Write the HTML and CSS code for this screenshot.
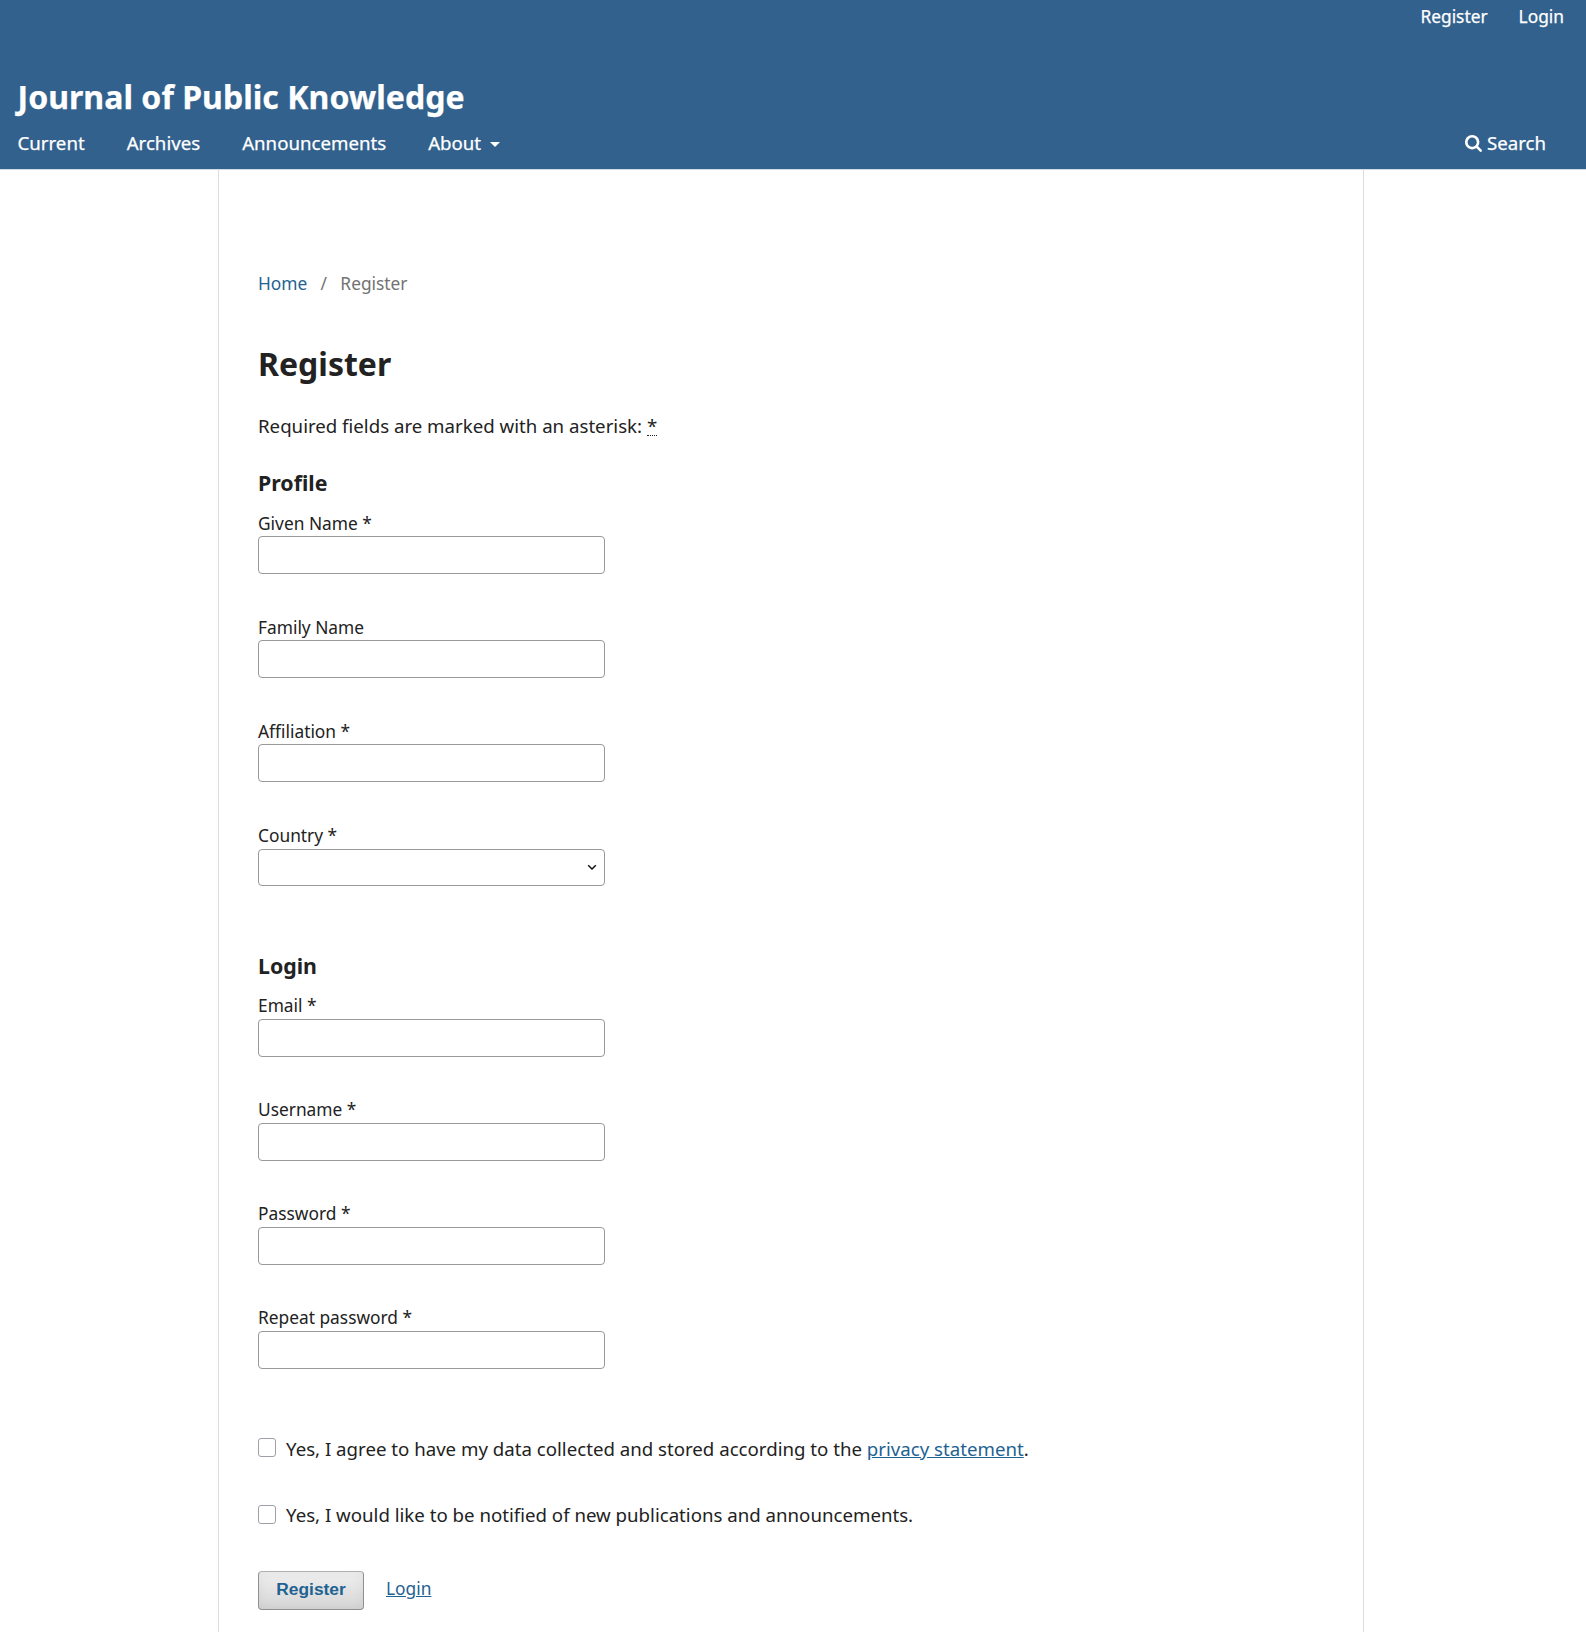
FILE: index.html
```html
<!DOCTYPE html>
<html lang="en">
<head>
<meta charset="utf-8">
<title>Register | Journal of Public Knowledge</title>
<link rel="stylesheet" href="styles.css">
</head>
<body>
<header class="head">
  <nav class="user-nav"><a href="#">Register</a><a href="#">Login</a></nav>
  <div class="site-name">Journal of Public Knowledge</div>
  <div class="nav-row">
    <nav class="primary-nav"><a href="#">Current</a><a href="#">Archives</a><a href="#">Announcements</a><a href="#">About<span class="caret"></span></a></nav>
    <a class="search" href="#"><svg class="search-icon" viewBox="0 0 1664 1664"><path fill="currentColor" d="M1152 704q0-185-131.500-316.500t-316.500-131.500-316.500 131.500-131.500 316.500 131.500 316.500 316.500 131.500 316.500-131.500 131.500-316.500zm512 832q0 52-38 90t-90 38q-54 0-90-38l-343-342q-179 124-399 124-143 0-273.500-55.500t-225-150-150-225-55.500-273.500 55.500-273.500 150-225 225-150 273.500-55.500 273.500 55.500 225 150 150 225 55.500 273.500q0 220-124 399l343 343q37 37 37 90z"/></svg>Search</a>
  </div>
</header>
<main class="content">
  <nav class="breadcrumbs"><a href="#">Home</a><span>/</span><span>Register</span></nav>
  <h1>Register</h1>
  <form>
    <p class="required-note">Required fields are marked with an asterisk: <abbr>*</abbr></p>
    <section class="group profile">
      <h2>Profile</h2>
      <div class="field"><label for="given">Given Name *</label><input id="given" type="text"></div>
      <div class="field"><label for="family">Family Name</label><input id="family" type="text"></div>
      <div class="field"><label for="affiliation">Affiliation *</label><input id="affiliation" type="text"></div>
      <div class="field"><label for="country">Country *</label>
        <div class="select" id="country"><svg class="chevron" viewBox="0 0 10 7"><path d="M1.200 1.200 5 5 8.800 1.200" fill="none" stroke="#111" stroke-width="1.500"/></svg></div></div>
    </section>
    <section class="group">
      <h2>Login</h2>
      <div class="field"><label for="email">Email *</label><input id="email" type="text"></div>
      <div class="field"><label for="username">Username *</label><input id="username" type="text"></div>
      <div class="field"><label for="password">Password *</label><input id="password" type="password"></div>
      <div class="field"><label for="repeat">Repeat password *</label><input id="repeat" type="password"></div>
    </section>
    <label class="consent"><input type="checkbox"><span>Yes, I agree to have my data collected and stored according to the <a href="#">privacy statement</a>.</span></label>
    <label class="consent notify"><input type="checkbox"><span>Yes, I would like to be notified of new publications and announcements.</span></label>
    <div class="buttons"><button type="button">Register</button><a href="#">Login</a></div>
  </form>
</main>
</body>
</html>
```
FILE: styles.css
```css
* { box-sizing: border-box; }
body {
  margin: 0;
  background: #fff;
  color: #222;
  font-family: "Noto Sans", sans-serif;
  font-size: 18.67px;
  line-height: 33px;
}
a { color: #1e6292; }
.head {
  height: 170px;
  background: #32618d;
  border-bottom: 1px solid #d5dae2;
  -webkit-text-stroke: .25px #fff;
}
.head a { color: #fff; text-decoration: none; }
.user-nav {
  display: flex;
  justify-content: flex-end;
  gap: 31px;
  height: 33px;
  padding-right: 22px;
  font-size: 17.33px;
}
.site-name {
  margin-top: 44px;
  padding-left: 17.5px;
  color: #fff;
  font-size: 32px;
  font-weight: 700;
  letter-spacing: .04px;
  line-height: 40px;
}
.nav-row {
  display: flex;
  justify-content: space-between;
  margin-top: 9px;
  padding: 0 40px 0 17.5px;
}
.primary-nav { display: flex; gap: 42px; }
.caret {
  display: inline-block;
  margin-left: 9px;
  border: 5px solid transparent;
  border-top-color: #fff;
  border-bottom: 0;
  vertical-align: 3px;
}
.search { display: flex; align-items: center; gap: 5px; }
.search-icon { width: 17px; height: 17px; margin-top: 2px; }
.content {
  width: 1146px;
  height: 1462px;
  margin-left: 218px;
  padding: 97px 39px 0;
  border: solid #ddd;
  border-width: 0 1px;
}
.breadcrumbs {
  display: flex;
  gap: 13.3px;
  color: #737373;
  font-size: 17.33px;
}
.breadcrumbs a { text-decoration: none; }
h1 {
  margin: 44px 0 25px;
  font-size: 32px;
  line-height: 40px;
}
.required-note { margin: 0 0 24px; }
abbr {
  display: inline-block;
  height: 19px;
  border-bottom: 1px dotted #222;
  line-height: 1;
}
.group { margin-bottom: 63px; }
h2 {
  margin: 0 0 10px;
  font-size: 21.33px;
  line-height: 33px;
}
.field {
  display: flex;
  flex-direction: column;
  width: 347px;
  margin-bottom: 39px;
}
.field:last-child { margin-bottom: 0; }
.field label { height: 27px; font-size: 17.33px; line-height: 27px; }
.profile label { line-height: 29px; }
.field input, .select {
  width: 347px;
  height: 38px;
  border: 1px solid #999;
  border-radius: 4px;
  background: #fff;
}
.select {
  display: flex;
  align-items: center;
  justify-content: flex-end;
  height: 37px;
  margin-top: 1px;
  padding-right: 7px;
}
.chevron { width: 10px; height: 7px; }
.consent {
  display: flex;
  gap: 10px;
  margin-bottom: 33px;
}
.consent input {
  appearance: none;
  width: 18px;
  height: 19px;
  margin: 6px 0 0;
  border: 1px solid #9f9fa8;
  border-radius: 3px;
}
.notify input { margin-top: 7px; }
.buttons {
  display: flex;
  gap: 22px;
  margin-top: 40px;
  font-size: 17.33px;
  line-height: 35px;
}
button {
  width: 106px;
  height: 39px;
  padding: 0 0 2px;
  border: 1px solid #8f8f8f;
  border-top-color: #b0b0b0;
  border-radius: 4px;
  background: linear-gradient(#efefef, #d6d6d6);
  box-shadow: inset 0 0 12px rgba(0, 0, 0, .05);
  color: #1e6292;
  font: 700 17.33px "Liberation Sans", Arial, sans-serif;
}
```
